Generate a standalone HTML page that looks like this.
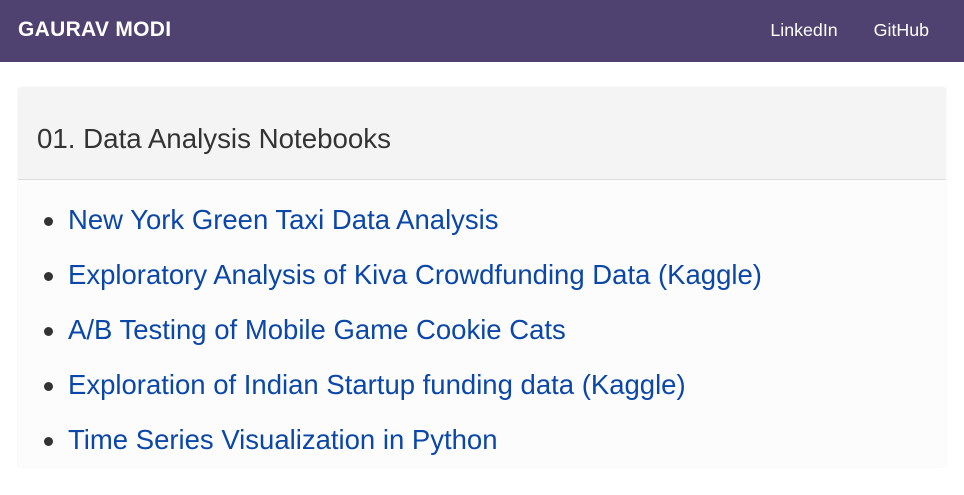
<!DOCTYPE html>
<html><head><meta charset="utf-8"><style>
body{margin:0;background:#fff;font-family:"Liberation Sans","DejaVu Sans",sans-serif;width:964px;height:492px;overflow:hidden}
.nav{height:62px;background:#4f4270;color:#fff;position:relative}
.brand{position:absolute;left:18px;top:18px;font-size:21px;font-weight:bold;letter-spacing:0.3px}
.links{position:absolute;right:35px;top:20px;font-size:17.8px}
.links span{margin-left:36px}
.card{position:absolute;left:18px;top:87px;width:928px;height:380px;background:#fcfcfc;border-radius:3px;box-shadow:0 0 1px rgba(0,0,0,.12)}
.hd{height:92px;background:#f4f4f4;border-bottom:1px solid #ddd;border-radius:3px 3px 0 0}
.hd h2{margin:0;position:absolute;left:19px;top:36px;font-size:27.7px;font-weight:normal;color:#333}
ul{margin:0;padding:0;list-style:none;position:absolute;left:44px;top:220px}
li{height:55px;font-size:27.5px;color:#0b47a8;position:relative;padding-left:24px;line-height:30px;margin-top:-15px;margin-bottom:15px}
li:before{content:"";position:absolute;left:0;top:12px;width:9px;height:9px;border-radius:50%;background:#333}
</style></head><body>
<div class="nav"><div class="brand">GAURAV MODI</div><div class="links"><span>LinkedIn</span><span>GitHub</span></div></div>
<div class="card"><div class="hd"><h2>01. Data Analysis Notebooks</h2></div></div>
<ul>
<li>New York Green Taxi Data Analysis</li>
<li>Exploratory Analysis of Kiva Crowdfunding Data (Kaggle)</li>
<li>A/B Testing of Mobile Game Cookie Cats</li>
<li>Exploration of Indian Startup funding data (Kaggle)</li>
<li>Time Series Visualization in Python</li>
</ul>
</body></html>
